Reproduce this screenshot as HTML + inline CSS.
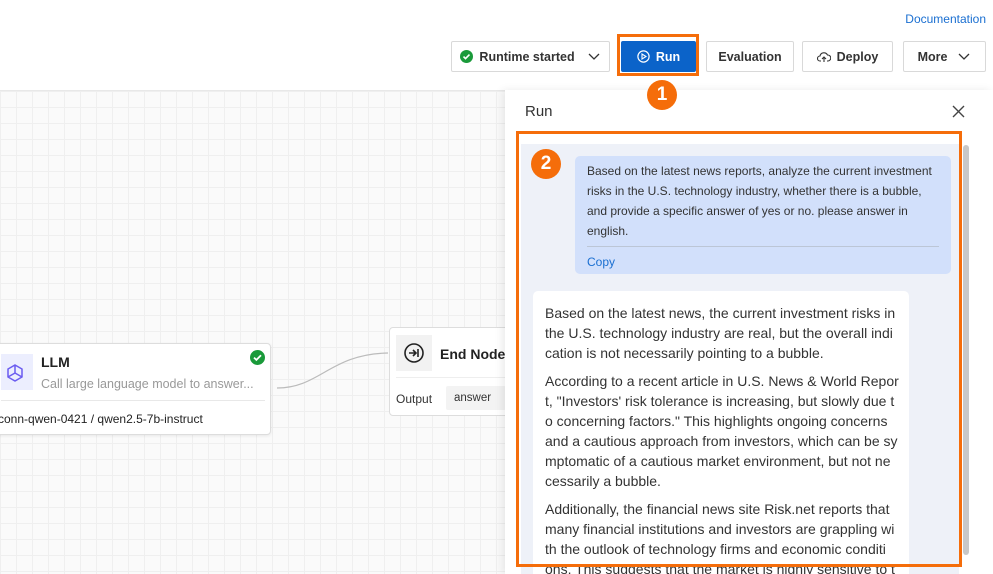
<!DOCTYPE html>
<html><head><meta charset="utf-8"><style>
*{margin:0;padding:0;box-sizing:border-box}
html,body{width:993px;height:574px;overflow:hidden}
body{position:relative;background:#fff;font-family:"Liberation Sans",sans-serif;color:#333}
.abs{position:absolute}
.canvas{left:0;top:90px;width:993px;height:484px;background-color:#fafafa;background-image:linear-gradient(#efefef 1px,transparent 1px),linear-gradient(90deg,#efefef 1px,transparent 1px);background-size:16px 16px;border-top:1px solid #e8e8e8}
.btn{top:41px;height:31px;border:1px solid #d9d9d9;background:#fff;border-radius:2px;font-size:12.5px;font-weight:bold;color:#333;display:flex;align-items:center;justify-content:center;gap:6px}
.badge{width:30px;height:30px;border-radius:50%;background:#f56d0a;color:#fff;font-weight:bold;font-size:19px;display:flex;align-items:center;justify-content:center}
.ln{position:absolute;white-space:nowrap;font-size:14px;color:#333;line-height:20px}
.ul{position:absolute;white-space:nowrap;font-size:12px;color:#333;line-height:20px}
</style></head><body>
<div class="abs" style="right:7px;top:12px;font-size:12px;color:#1a6fd1">Documentation</div>
<div class="abs canvas"></div>

<div class="abs btn" style="left:451px;width:159px"><svg width="13" height="13"><circle cx="6.5" cy="6.5" r="6.5" fill="#1a9a3a"/><path d="M3.5 6.6l2 2 4-4" stroke="#fff" stroke-width="1.6" fill="none"/></svg>Runtime started <svg width="14" height="10" style="margin-left:6px"><path d="M2 2l5 5 5-5" stroke="#333" stroke-width="1.3" fill="none"/></svg></div>
<div class="abs" style="left:617px;top:34px;width:82px;height:42px;border:3px solid #f56d0a"></div>
<div class="abs btn" style="left:621px;top:41px;width:75px;background:#0b63c9;border-color:#0b63c9;color:#fff"><svg width="13" height="13"><circle cx="6.5" cy="6.5" r="5.6" stroke="#fff" stroke-width="1.2" fill="none"/><path d="M5 4v5l4-2.5z" fill="none" stroke="#fff" stroke-width="1.1"/></svg> Run</div>
<div class="abs btn" style="left:706px;width:88px">Evaluation</div>
<div class="abs btn" style="left:802px;width:91px"><svg width="14" height="12"><path d="M4 10H3a2.5 2.5 0 0 1 0-5 4 4 0 0 1 7.5-1A3 3 0 0 1 11 10h-1M7 11V6M5 8l2-2 2 2" stroke="#333" stroke-width="1.1" fill="none"/></svg>Deploy</div>
<div class="abs btn" style="left:903px;width:83px">More <svg width="14" height="10" style="margin-left:4px"><path d="M2 2l5 5 5-5" stroke="#333" stroke-width="1.3" fill="none"/></svg></div>

<!-- LLM node -->
<div class="abs" style="left:-10px;top:343px;width:281px;height:92px;background:#fff;border:1px solid #ddd;border-radius:4px;box-shadow:0 1px 3px rgba(0,0,0,.08)">
 <div class="abs" style="left:10px;top:10px;width:32px;height:36px;background:#eceefe"></div>
 <svg class="abs" style="left:14px;top:19px" width="20" height="20"><path d="M10 2l7 4v8l-7 4-7-4V6z M10 10V2M10 10l7 4M10 10l-7 4" stroke="#6b5cf0" stroke-width="1.5" fill="none"/></svg>
 <div class="abs" style="left:50px;top:10px;font-size:14px;font-weight:bold;color:#222">LLM</div>
 <div class="abs" style="left:50px;top:33px;font-size:12.5px;color:#999;white-space:nowrap">Call large language model to answer...</div>
 <svg class="abs" style="left:259px;top:6px" width="15" height="15"><circle cx="7.5" cy="7.5" r="7.5" fill="#1a9a3a"/><path d="M4 7.6l2.4 2.3 4.6-4.6" stroke="#fff" stroke-width="1.8" fill="none"/></svg>
 <div class="abs" style="left:10px;top:56px;width:264px;border-top:1px solid #e8e8e8"></div>
 <div class="abs" style="left:7px;top:68px;font-size:12px;color:#222;white-space:nowrap">conn-qwen-0421 / qwen2.5-7b-instruct</div>
</div>
<svg class="abs" style="left:270px;top:350px" width="125" height="45"><path d="M7 38C50 38 60 4 118 3" stroke="#bbb" stroke-width="1.2" fill="none"/></svg>
<!-- End node -->
<div class="abs" style="left:389px;top:327px;width:140px;height:89px;background:#fff;border:1px solid #ddd;border-radius:4px">
 <div class="abs" style="left:6px;top:7px;width:36px;height:36px;background:#f2f2f2"></div>
 <svg class="abs" style="left:13px;top:14px" width="22" height="22"><circle cx="11" cy="11" r="9" stroke="#222" stroke-width="1.6" fill="none"/><path d="M6 11h7M10 8l3 3-3 3M15 7v8" stroke="#222" stroke-width="1.6" fill="none"/></svg>
 <div class="abs" style="left:50px;top:18px;font-size:14px;font-weight:bold;color:#222">End Node</div>
 <div class="abs" style="left:6px;top:49px;width:130px;border-top:1px solid #eee"></div>
 <div class="abs" style="left:6px;top:64px;font-size:12px;color:#333">Output</div>
 <div class="abs" style="left:56px;top:58px;width:60px;height:24px;background:#f3f3f3;border-radius:2px;font-size:11.5px;padding:6px 8px">answer</div>
</div>

<!-- Run panel -->
<div class="abs" style="left:505px;top:90px;width:488px;height:484px;background:#fff;box-shadow:-3px 0 8px rgba(0,0,0,.08)"></div>
<div class="abs badge" style="left:647px;top:80px">1</div>
<div class="abs" style="left:525px;top:103px;font-size:15px;color:#333">Run</div>
<svg class="abs" style="left:952px;top:105px" width="13" height="13"><path d="M1 1l11 11M12 1L1 12" stroke="#444" stroke-width="1.4"/></svg>
<div class="abs" style="left:521px;top:144px;width:438px;height:430px;background:#eef1f8"></div>
<div class="abs" style="left:963px;top:145px;width:6px;height:410px;background:#c8c8c8;border-radius:3px"></div>

<div class="abs" style="left:575px;top:156px;width:376px;height:118px;background:#d2e0fb;border-radius:5px"></div>
<div class="ul" style="left:587px;top:161px">Based on the latest news reports, analyze the current investment</div>
<div class="ul" style="left:587px;top:181px">risks in the U.S. technology industry, whether there is a bubble,</div>
<div class="ul" style="left:587px;top:201px">and provide a specific answer of yes or no. please answer in</div>
<div class="ul" style="left:587px;top:221px">english.</div>
<div class="abs" style="left:587px;top:246px;width:352px;border-top:1px solid #bcc6d6"></div>
<div class="ul" style="left:587px;top:252px;color:#1a6fd1">Copy</div>

<div class="abs" style="left:533px;top:291px;width:376px;height:300px;background:#fff;border-radius:5px"></div>
<div class="ln" style="left:545px;top:303px">Based on the latest news, the current investment risks in</div>
<div class="ln" style="left:545px;top:323px">the U.S. technology industry are real, but the overall indi</div>
<div class="ln" style="left:545px;top:343px">cation is not necessarily pointing to a bubble.</div>
<div class="ln" style="left:545px;top:371px">According to a recent article in U.S. News &amp; World Repor</div>
<div class="ln" style="left:545px;top:391px">t, "Investors' risk tolerance is increasing, but slowly due t</div>
<div class="ln" style="left:545px;top:411px">o concerning factors." This highlights ongoing concerns</div>
<div class="ln" style="left:545px;top:431px">and a cautious approach from investors, which can be sy</div>
<div class="ln" style="left:545px;top:451px">mptomatic of a cautious market environment, but not ne</div>
<div class="ln" style="left:545px;top:471px">cessarily a bubble.</div>
<div class="ln" style="left:545px;top:499px">Additionally, the financial news site Risk.net reports that</div>
<div class="ln" style="left:545px;top:519px">many financial institutions and investors are grappling wi</div>
<div class="ln" style="left:545px;top:539px">th the outlook of technology firms and economic conditi</div>
<div class="ln" style="left:545px;top:559px">ons. This suggests that the market is highly sensitive to t</div>

<div class="abs" style="left:516px;top:131px;width:446px;height:436px;border:3px solid #f56d0a"></div>
<div class="abs badge" style="left:531px;top:149px">2</div>
</body></html>
